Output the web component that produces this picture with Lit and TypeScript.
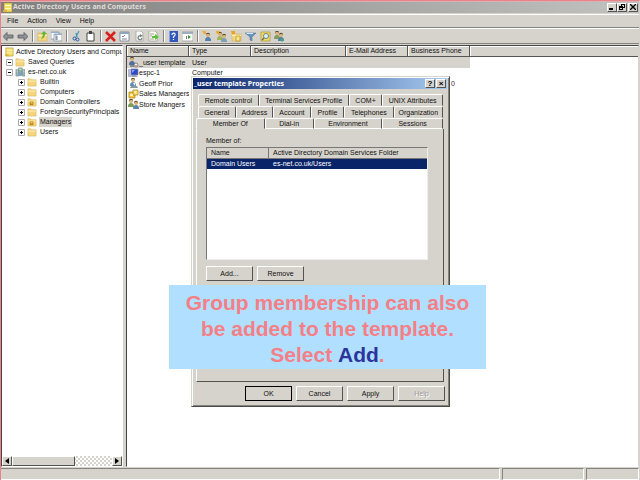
import { LitElement, html, svg, css, nothing } from "lit";
import { customElement } from "lit/decorators.js";
import { classMap } from "lit/directives/class-map.js";

const person = (x: number, y: number, coat: string) => svg`
  <path d="M${x} ${y + 8}c0-3 1-4 3-4s3 1 3 4z" fill=${coat}/>
  <circle cx=${x + 3} cy=${y + 2} r="2" fill="#d8b078"/>
  <path d="M${x + 1} ${y + 2}c0-3 4-3 4 0l-1-1h-2z" fill="#5a4a32"/>`;
const folder = svg`<path d="M1 2h3l1 1h5v7H1z" fill="#f5d67c" stroke="#d3b060" stroke-width=".6"/><path d="M1 4h9v1H1z" fill="#fdf0b8"/>`;

const shapes: Record<string, unknown> = {
  console: svg`<path d="M2 1h8v9H2z" fill="#f3df68" stroke="#a88a28" stroke-width=".6"/><path d="M3 3h6v1H3zm0 3h6v1H3z" fill="#fff8c8"/><path d="M1 8h4v2H1z" fill="#d6b93d"/>`,
  folder,
  unit: svg`${folder}<path d="M3 5h4v4H3z" fill="#b98616"/><path d="M4 6h2v1H4z" fill="#fff3b0"/>`,
  domain: svg`<path d="M4 1h4v8H4z" fill="#8fb5a3" stroke="#60857b" stroke-width=".6"/><path d="M1 3h3v7H1zm7 0h3v7H8z" fill="#9fb9b6" stroke="#647f83" stroke-width=".6"/><path d="M4 6h3v4H4z" fill="#7d9fc8"/><path d="M5 2h2v1H5zM2 4h1v1H2zm7 0h1v1H9z" fill="#e6f5ef"/>`,
  user: svg`${person(2, 0, "#668bb5")}<path d="M3 8h6l1 2H2z" fill="#8898a0"/><path d="M5 5h2v3z" fill="#fff"/>`,
  template: svg`${person(1, 0, "#526c9c")}<path d="M2 8h4v2H2z" fill="#848c93"/><circle cx="8" cy="8" r="2" fill="#f7f7f7" stroke="#555" stroke-width=".7"/><path d="M7 8h2L8 9z" fill="#c33"/>`,
  computer: svg`<path d="M3 1h7v6H3z" fill="#2c49c8" stroke="#8189a3" stroke-width=".8"/><path d="M0 1h3v8H0z" fill="#b5b9cf"/><path d="M4 2h3L4 5z" fill="#8aa6ff"/><path d="M4 7h4l2 2H3z" fill="#9aa1b5"/>`,
  group: svg`<path d="M1 3h6v6H1z" fill="#f1ca3d" stroke="#a3790e" stroke-width=".7"/><path d="M5 1h5v5H5z" fill="#f8df73" stroke="#a3790e" stroke-width=".7"/><path d="M2 5h3v2H2zM6 2h2v2H6z" fill="#fff3b2"/>`,
  people: svg`${person(0, 0, "#7c9c58")}${person(5, 2, "#5c84a5")}`,
  back: svg`<path d="M0 5.500l4-4v2.500h6v3H4v2.500z" fill="#8d9399" stroke="#56595c" stroke-width=".8"/>`,
  forward: svg`<path d="M11 5.500l-4-4v2.500H1v3h6v2.500z" fill="#8d9399" stroke="#56595c" stroke-width=".8"/>`,
  up: svg`${folder}<path d="M7 0l3 3H8c0 3-1 4-4 5 1-2 2-3 2-5H4z" fill="#62b83a"/>`,
  tree: svg`<path d="M0 1h8v7H0z" fill="#fff" stroke="#7b8795" stroke-width=".7"/><path d="M3 3h8v7H3z" fill="#f8fbff" stroke="#7b8795" stroke-width=".7"/><path d="M0 1h8v1H0zM3 3h8v1H3z" fill="#95b0cc"/><path d="M5 4v5m0-3h2m-2 2h2" stroke="#567" stroke-width=".8"/>`,
  cut: svg`<path d="M8 0L5 6M5 2l1 4" stroke="#4b96bd" stroke-width="1.200"/><circle cx="3.500" cy="7.500" r="1.500" fill="none" stroke="#245ca8"/><circle cx="6.500" cy="8.500" r="1.500" fill="none" stroke="#245ca8"/>`,
  paste: svg`<path d="M2 2h7v8H2z" fill="#fff" stroke="#444" stroke-width="1"/><path d="M4 0h3v3H4z" fill="#444"/>`,
  remove: svg`<path d="M1 1l9 9M10 1L1 10" stroke="#d8201c" stroke-width="2.600"/>`,
  props: svg`<path d="M1 1h9v9H1z" fill="#fff" stroke="#6f7781" stroke-width=".8"/><path d="M1 1h9v2H1z" fill="#8ea5bd"/><path d="M3 5l1 1 2-2M3 8h5" stroke="#567" stroke-width=".8" fill="none"/>`,
  refresh: svg`<path d="M2 0h5l2 2v8H2z" fill="#f8f8f8" stroke="#999" stroke-width=".7"/><path d="M7 5a2 2 0 1 0 1 2" fill="none" stroke="#6d7f75" stroke-width="1.200"/><path d="M6 3l3 2-3 1z" fill="#6d7f75"/>`,
  send: svg`<path d="M1 0h6l2 2v8H1z" fill="#fffff0" stroke="#999" stroke-width=".7"/><path d="M2 3h4M2 5h2M2 8h4" stroke="#777" stroke-width=".7"/><path d="M4 5h3V3l4 3-4 3V7H4z" fill="#5bc23f"/>`,
  help: svg`<path d="M1 0h9v11H1z" fill="#3157ba"/><path d="M1 0h1v11H1z" fill="#87a1e5"/><path d="M4 4c0-3 4-2 3 0L5.500 6v1M5.500 8v1" fill="none" stroke="#fff" stroke-width="1.200"/>`,
  pane: svg`<path d="M0 1h11v9H0z" fill="#fff" stroke="#8b8d92" stroke-width=".7"/><path d="M0 1h11v2H0z" fill="#9daebf"/><path d="M4 5h1v3H4z" fill="#777"/><path d="M6 4l3 2-3 2z" fill="#379433"/>`,
  newuser: svg`${person(3, 2, "#537fb3")}<path d="M0 0h4v3H2z" fill="#efac35"/>`,
  newgroup: svg`${person(1, 1, "#a7b357")}${person(5, 3, "#7fa0b0")}<path d="M0 0h3v3H1z" fill="#ecaa20"/>`,
  newunit: svg`${folder}<path d="M5 5h4v5H5z" fill="#f9e68d" stroke="#b58b21" stroke-width=".7"/><path d="M0 0h4v3H1z" fill="#ef9e26"/>`,
  filter: svg`<path d="M0 2h11L7 6v4L5 9V6z" fill="#6795bd" stroke="#496f93" stroke-width=".5"/><path d="M1 2h7v1H2z" fill="#d3e6f4"/>`,
  find: svg`<path d="M1 1h9v9H1z" fill="#f0db62" stroke="#9d882e" stroke-width=".6"/><circle cx="6" cy="5" r="2.500" fill="#e0f2f4" stroke="#718088"/><path d="M4 7L2 9" stroke="#596468" stroke-width="1.200"/>`,
  addto: svg`${person(0, 0, "#849c60")}${person(4, 2, "#567c9c")}<path d="M8 7v4M6 9h4" stroke="#4a8" stroke-width="1"/>`,
};

const icon = (name: string) =>
  html`<svg class="icon" viewBox="0 0 11 11" aria-hidden="true">${shapes[name]}</svg>`;

const tools: [string, string][][] = [
  [["back", "Back"], ["forward", "Forward"]],
  [["up", "Up one level"], ["tree", "Show console tree"]],
  [["cut", "Cut"], ["paste", "Paste"]],
  [["remove", "Delete"], ["props", "Properties"], ["refresh", "Refresh"], ["send", "Export list"]],
  [["help", "Help"], ["pane", "Show action pane"]],
  [["newuser", "New user"], ["newgroup", "New group"], ["newunit", "New organizational unit"], ["filter", "Filter"], ["find", "Find"], ["addto", "Add to group"]],
];

const containers: [string, string][] = [
  ["Builtin", "folder"],
  ["Computers", "folder"],
  ["Domain Controllers", "unit"],
  ["ForeignSecurityPrincipals", "folder"],
  ["Managers", "unit"],
  ["Users", "folder"],
];

const entries: [string, string, string, string][] = [
  ["template", "_user template", "User", ""],
  ["computer", "espc-1", "Computer", ""],
  ["user", "Geoff Prior", "", "0"],
  ["group", "Sales Managers", "", ""],
  ["people", "Store Mangers", "", ""],
];

const base = css`
  * { box-sizing: border-box; }
  button { font: inherit; color: inherit; margin: 0; padding: 0; border: 0; background: none; white-space: nowrap; }
  table { border-collapse: separate; border-spacing: 0; table-layout: fixed; width: 100%; }
  th, td { padding: 0; text-align: left; font-weight: normal; white-space: nowrap; overflow: hidden; }
  .raised { background: #d6d3cc; border: 1px solid; border-color: #fff #55534f #55534f #fff; }
`;

@customElement("properties-dialog")
export class PropertiesDialog extends LitElement {
  static styles = [base, css`
    :host { display: flex; flex-direction: column; background: #d6d3cc; border: 1px solid; border-color: #d6d3cc #4a4a48 #4a4a48 #d6d3cc; box-shadow: inset 1px 1px #fff, inset -1px -1px #85837e; padding: 1px 2px 5px 1px; }
    .title { display: flex; align-items: center; gap: 1px; height: 11px; padding: 0 1px; background: linear-gradient(90deg, #0a246a, #a6caf0); color: #fff; }
    .title h2 { flex: 1; margin: 0; font: bold 7px/11px "Noto Sans", sans-serif; }
    .box { width: 10px; height: 9px; color: #000; font-size: 8px; line-height: 7px; font-weight: bold; }
    .tabs { display: flex; flex-direction: column; margin: 5px 3px 0 3px; }
    .line { display: flex; height: 12px; padding: 0 1px 0 2px; }
    .line.front { height: 11px; padding-left: 0; }
    .tab { border: 1px solid; border-color: #fff #55534f transparent #fff; border-radius: 2px 2px 0 0; line-height: 11px; overflow: hidden; }
    .front .tab { border-bottom-color: #fff; line-height: 10px; }
    .front .tab.on { border-bottom-color: transparent; }
    .w32 { flex: 32 1 0; } .w36 { flex: 36 1 0; } .w48 { flex: 48 1 0; } .w60 { flex: 60 1 0; } .w68 { flex: 68 1 0; } .w90 { flex: 90 1 0; }
    .page { flex: 1; margin: 0 3px; padding: 5px 15px 0 9px; border: 1px solid; border-color: transparent #55534f #55534f #fff; border-top: 0; display: flex; flex-direction: column; }
    .label { line-height: 13px; }
    .groups { height: 113px; background: #fff; border: 1px solid; border-color: #777 #eee #eee #777; }
    .groups th { height: 11px; padding-left: 4px; border-bottom: 1px solid #777; border-right: 1px solid #777; background: #d6d3cc; }
    .groups th:last-child { border-right: 0; }
    .groups td { height: 10px; padding-left: 4px; background: #0a246a; color: #fff; }
    .name { width: 62px; }
    .row { display: flex; gap: 4px; margin-top: 6px; }
    .push { width: 47px; height: 15px; line-height: 12px; }
    .row.end { justify-content: flex-end; margin: 4px 2px 0 0; }
    .default { outline: 1px solid #000; outline-offset: -1px; }
    .push:disabled { color: #999; text-shadow: 1px 1px #fff; }
  `];

  render() {
    const tab = (label: string, size: string, on = false) =>
      html`<button class=${classMap({ tab: true, on, [size]: true })} role="tab" aria-selected=${on}>${label}</button>`;
    return html`
      <div class="title"><h2>_user template Properties</h2>
        <button class="box raised" aria-label="What's this">?</button><button class="box raised" aria-label="Close">×</button>
      </div>
      <div class="tabs" role="tablist">
        <div class="line">${tab("Remote control", "w60")}${tab("Terminal Services Profile", "w90")}${tab("COM+", "w32")}${tab("UNIX Attributes", "w60")}</div>
        <div class="line">${tab("General", "w36")}${tab("Address", "w36")}${tab("Account", "w36")}${tab("Profile", "w32")}${tab("Telephones", "w48")}${tab("Organization", "w48")}</div>
        <div class="line front">${tab("Member Of", "w68", true)}${tab("Dial-in", "w48")}${tab("Environment", "w68")}${tab("Sessions", "w60")}</div>
      </div>
      <div class="page" role="tabpanel">
        <div class="label" id="member">Member of:</div>
        <div class="groups">
          <table aria-labelledby="member">
            <thead><tr><th class="name">Name</th><th>Active Directory Domain Services Folder</th></tr></thead>
            <tbody><tr><td>Domain Users</td><td>es-net.co.uk/Users</td></tr></tbody>
          </table>
        </div>
        <div class="row"><button class="push raised">Add...</button><button class="push raised">Remove</button></div>
      </div>
      <div class="row end">
        <button class="push raised default">OK</button><button class="push raised">Cancel</button>
        <button class="push raised">Apply</button><button class="push raised" disabled>Help</button>
      </div>`;
  }
}

@customElement("app-root")
export class AppRoot extends LitElement {
  static styles = [base, css`
    :host { position: relative; display: flex; flex-direction: column; height: 100vh; overflow: hidden; border: 1px solid #e8838b; border-right-color: #d6d3cc; border-bottom: 0; background: #d6d3cc; color: #111; font: 7px/10px "Liberation Sans", Arial, sans-serif; box-sizing: border-box; }
    .icon { display: block; width: 11px; height: 11px; flex: none; }
    .title { display: flex; align-items: center; height: 12px; padding: 0 1px 1px 1px; background: linear-gradient(90deg, #7f7f7f, #c2c2c0); color: #dedcd8; border-top: 1px solid #ddb0b0; }
    .title h1 { flex: 1; margin: 0; font: bold 7px/10px "Noto Sans", sans-serif; }
    .box { width: 10px; height: 9px; display: flex; align-items: center; justify-content: center; }
    .box svg { width: 6px; height: 6px; }
    .box + .last { margin-left: 1px; }
    .menu { display: flex; gap: 9px; height: 14px; margin-top: 1px; padding: 0 6px; border-bottom: 1px solid #85837e; border-top: 1px solid #fff; }
    .tools { display: flex; align-items: center; height: 16px; border-top: 1px solid #fff; border-bottom: 1px solid #85837e; }
    .group { display: grid; grid-auto-flow: column; grid-auto-columns: 1fr; justify-items: center; }
    .two { width: 29px; } .four { width: 58px; } .six { width: 87px; }
    .rule { width: 1px; height: 12px; margin: 0 2px; background: #85837e; box-shadow: 1px 0 #fff; }
    .panes { flex: 1; min-height: 0; display: flex; gap: 3px; margin-top: 1px; }
    .side { width: 122px; display: flex; flex-direction: column; background: #fff; border: 1px solid; border-color: #444 #fff #fff #444; }
    .tree { flex: 1; margin: 0; padding: 1px 0 0 2px; list-style: none; overflow: hidden; }
    .tree ul { margin: 0; padding: 0 0 0 12px; list-style: none; }
    .tree .top { padding-left: 2px; }
    .node { display: flex; align-items: center; height: 10px; gap: 1px; white-space: nowrap; }
    .node .icon { width: 10px; height: 10px; }
    .twist { width: 7px; height: 7px; flex: none; }
    .twist + .icon { margin: 0 1px; }
    .node .text { padding: 0 1px; }
    .node .chosen { background: #d6d3cc; }
    .scroll { display: flex; height: 10px; background: repeating-conic-gradient(#d6d3cc 0 25%, #fff 0 50%) 0 0 / 4px 4px; }
    .arrow { width: 10px; display: flex; align-items: center; justify-content: center; }
    .arrow svg { width: 4px; height: 6px; }
    .thumb { width: 63px; }
    .gap { flex: 1; }
    .list { flex: 1; min-width: 0; background: #fff; border: 1px solid; border-color: #444 #d6d3cc #fff #444; }
    .c62 { width: 62px; } .c95 { width: 95px; }
    .list th { height: 11px; padding-left: 3px; background: #d6d3cc; border-bottom: 1px solid #555; border-right: 1px solid #555; box-shadow: inset 1px 1px #fff; }
    .list th:last-child { border-right: 0; }
    .list tbody tr { height: 11px; }
    .list tbody tr:nth-child(even) { height: 10px; }
    .list td { padding-left: 3px; line-height: 10px; }
    .list .first { padding-left: 1px; }
    .entry { display: flex; align-items: center; height: 10px; }
    .list .phone { text-align: right; padding-right: 15px; color: #424; }
    .picked td { background: #d6d3cc; }
    .status { display: flex; gap: 2px; height: 12px; margin-top: 1px; }
    .cell { border: 1px solid; border-color: #85837e #fff #fff #85837e; flex: none; width: 82px; }
    .cell.wide { flex: 1; border-left: 0; }
    .cell.end { width: 53px; }
    .dialog { position: absolute; left: 190px; top: 75px; width: 259px; height: 331px; }
    .note { position: absolute; left: 168px; top: 284px; width: 317px; height: 84px; margin: 0; padding: 5px 0; background: #b1dfff; color: #f47f86; font-size: 21px; line-height: 26px; font-weight: bold; text-align: center; white-space: nowrap; }
    .note strong { color: #2b349c; }
  `];

  render() {
    const twist = (open: boolean) => html`<svg class="twist" viewBox="0 0 7 7" aria-hidden="true"><path d="M.500.500h6v6h-6z" fill="#fff" stroke="#aaa"/><path d=${open ? "M2 3h3v1H2z" : "M2 3h1V2h1v1h1v1H4v1H3V4H2z"} fill="#000"/></svg>`;
    const node = (label: string, glyph: string, open: boolean) => html`<div class="node">${twist(open)}${icon(glyph)}<span class=${classMap({ text: true, chosen: label === "Managers" })}>${label}</span></div>`;
    const size: Record<number, string> = { 2: "two", 4: "four", 6: "six" };
    return html`
      <header class="title">${icon("console")}<h1>Active Directory Users and Computers</h1>
        <button class="box raised" aria-label="Minimize"><svg viewBox="0 0 6 6"><path d="M0 4h4v2H0z"/></svg></button>
        <button class="box raised" aria-label="Restore"><svg viewBox="0 0 6 6"><path d="M2 0h4v4H4v2H0V2h2zm1 1v1h1v1h1V1zM1 4v1h2V4z" fill-rule="evenodd"/></svg></button>
        <button class="box raised last" aria-label="Close"><svg viewBox="0 0 6 6"><path d="M0 0l6 6M6 0L0 6" stroke="#000" stroke-width="1.400"/></svg></button>
      </header>
      <nav class="menu">${["File", "Action", "View", "Help"].map((m) => html`<button>${m}</button>`)}</nav>
      <div class="tools" role="toolbar">
        ${tools.map((g, i) => html`${i ? html`<span class="rule"></span>` : nothing}<div class="group ${size[g.length]}">${g.map(([n, label]) => html`<button aria-label=${label}>${icon(n)}</button>`)}</div>`)}
      </div>
      <main class="panes">
        <div class="side">
          <ul class="tree">
            <li><div class="node">${icon("console")}<span class="text">Active Directory Users and Computers</span></div>
              <ul class="top">
                <li>${node("Saved Queries", "folder", true)}</li>
                <li>${node("es-net.co.uk", "domain", true)}
                  <ul>${containers.map(([label, glyph]) => html`<li>${node(label, glyph, false)}</li>`)}</ul>
                </li>
              </ul>
            </li>
          </ul>
          <div class="scroll">
            <button class="arrow raised" aria-label="Scroll left"><svg viewBox="0 0 4 6"><path d="M4 0v6L0 3z"/></svg></button>
            <div class="thumb raised"></div><div class="gap"></div>
            <button class="arrow raised" aria-label="Scroll right"><svg viewBox="0 0 4 6"><path d="M0 0v6l4-3z"/></svg></button>
          </div>
        </div>
        <div class="list">
          <table>
            <thead><tr><th class="c62">Name</th><th class="c62">Type</th><th class="c95">Description</th><th class="c62">E-Mail Address</th><th class="c62">Business Phone</th><th></th></tr></thead>
            <tbody>${entries.map(([glyph, name, type, phone], i) => html`
              <tr class=${classMap({ picked: i === 0 })}><td class="first"><div class="entry">${icon(glyph)}<span>${name}</span></div></td><td>${type}</td><td></td><td></td><td class="phone">${phone}</td></tr>`)}
            </tbody>
          </table>
        </div>
      </main>
      <footer class="status"><div class="cell wide"></div><div class="cell"></div><div class="cell end"></div></footer>
      <properties-dialog class="dialog" role="dialog"></properties-dialog>
      <p class="note">Group membership can also<br>be added to the template.<br>Select <strong>Add</strong>.</p>`;
  }
}
